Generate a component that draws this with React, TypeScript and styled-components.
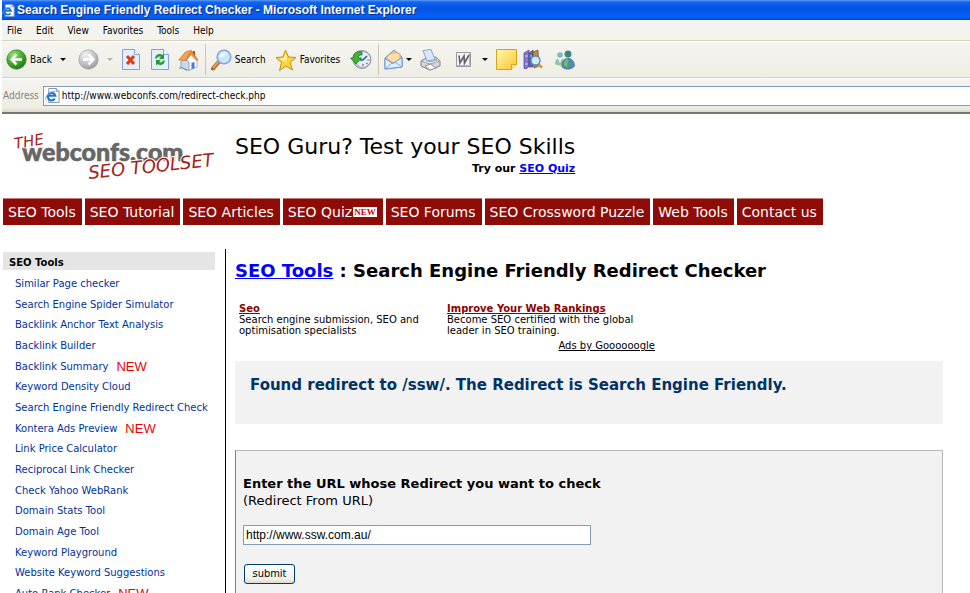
import React from "react";
import styled, { createGlobalStyle } from "styled-components";

const ui = `"DejaVu Sans Condensed", "DejaVu Sans", sans-serif`;
const page = `"DejaVu Sans", Verdana, sans-serif`;

const GlobalStyle = createGlobalStyle`
  * { box-sizing: border-box; }
  html, body, #root { height: 100%; }
  body { margin: 0; background: #fff; color: #000; font-family: ${page}; overflow: hidden; }
  h1, h2, p, ul { margin: 0; padding: 0; }
  ul { list-style: none; }
  svg { display: block; flex: none; }
`;

const Window = styled.div`
  height: 100%;
  display: flex;
  flex-direction: column;
  padding-left: 2px;
  overflow: hidden;
`;

const TitleBar = styled.header`
  flex: none;
  height: 20px;
  display: flex;
  align-items: center;
  gap: 2px;
  background: linear-gradient(#5c9cf0 0, #1465f0 2px, #0353e4 8px, #0560f8 17px, #0347cc 20px);
  color: #fff;
  font: bold 12px/18px "Liberation Sans", sans-serif;
  text-shadow: 1px 1px 0 #0a2a80;
  white-space: nowrap;
`;

const MenuBar = styled.nav`
  flex: none;
  height: 21px;
  display: flex;
  align-items: center;
  gap: 14px;
  padding: 1px 0 0 5px;
  background: #f4f3ee;
  border-bottom: 1px solid #d6d2bd;
`;

const MenuItem = styled.button`
  border: 0;
  padding: 0;
  background: none;
  color: #000;
  font: 10px/16px ${ui};
`;

const ToolBar = styled.div`
  flex: none;
  height: 37px;
  display: flex;
  align-items: center;
  padding-left: 4px;
  background: linear-gradient(#f5f4ef, #eeede5);
  border-top: 1px solid #fff;
  border-bottom: 1px solid #d6d2bd;
`;

const ToolButton = styled.button<{ $gap?: number }>`
  border: 0;
  padding: 0;
  margin: 0 ${(p) => p.$gap ?? 6}px 0 0;
  display: flex;
  align-items: center;
  gap: 3px;
  background: none;
  color: #000;
  font: 10px/16px ${ui};
`;

const Arrow = styled.span<{ $dim?: boolean; $left?: number }>`
  margin-left: ${(p) => p.$left ?? 5}px;
  border: 3px solid transparent;
  border-top-color: ${(p) => (p.$dim ? "#b8b6ac" : "#000")};
  border-bottom: 0;
`;

const Rule = styled.span`
  width: 1px;
  height: 31px;
  margin-right: 5px;
  background: #cbc7b0;
`;

const AddressBar = styled.div`
  flex: none;
  height: 36px;
  display: flex;
  align-items: center;
  gap: 4px;
  padding-left: 1px;
  background: linear-gradient(#f5f4ef, #eeede3 29px, #d8d5c6 34px);
  border-top: 1px solid #fff;
  border-bottom: 2px solid #77766a;
`;

const AddressLabel = styled.label`
  color: #85847b;
  font: 10px/18px ${ui};
`;

const AddressField = styled.div`
  flex: 1;
  height: 20px;
  display: flex;
  align-items: center;
  padding-left: 1px;
  gap: 2px;
  background: #fff;
  border: 1px solid #7f9db9;
  border-right: 0;
`;

const AddressInput = styled.input`
  flex: 1;
  min-width: 0;
  border: 0;
  padding: 0;
  outline: 0;
  background: none;
  color: #000;
  font: 10px/16px ${ui};
`;

const Banner = styled.header`
  flex: none;
  display: flex;
  align-items: flex-start;
  height: 84px;
  padding: 16px 0 0 9px;
`;

const Promo = styled.div`
  margin-left: 14px;
  padding-top: 3px;
  text-align: right;
`;

const PromoTitle = styled.p`
  font-size: 22px;
  line-height: 28px;
`;

const PromoText = styled.p`
  font-size: 11px;
  line-height: 16px;
  font-weight: bold;
`;

const BlueLink = styled.a`
  color: #00f;
  text-decoration: underline;
`;

const NavBar = styled.nav`
  flex: none;
  display: flex;
  gap: 3px;
  padding-left: 1px;
`;

const NavLink = styled.a`
  height: 27px;
  display: flex;
  align-items: center;
  gap: 1px;
  padding: 0 6px 0 5px;
  background: #8f0b07;
  border-top: 1px solid #c07a78;
  color: #fff;
  font-size: 14px;
  line-height: 18px;
  text-decoration: none;
  white-space: nowrap;
`;

const NavBadge = styled.span`
  padding: 0 1px;
  background: #fff;
  color: #e00000;
  font: bold 9px/10px "Liberation Serif", serif;
`;

const Body = styled.div`
  flex: 1;
  min-height: 0;
  display: flex;
  padding: 24px 27px 0 1px;
`;

const SideBar = styled.aside`
  flex: none;
  width: 223px;
  padding: 3px 10px 0 0;
  border-right: 1px solid #000;
`;

const SideTitle = styled.h2`
  height: 18px;
  padding: 2px 0 0 6px;
  background: #e5e5e5;
  font-size: 10px;
  line-height: 18px;
`;

const SideList = styled.ul`
  height: 334px;
  padding: 4px 0 0 12px;
  display: flex;
  flex-direction: column;
  justify-content: space-between;
`;

const SideItem = styled.li`
  display: flex;
  align-items: center;
  gap: 8px;
  height: 20px;
  white-space: nowrap;
`;

const SideLink = styled.a`
  color: #003399;
  font-size: 10px;
  line-height: 20px;
  text-decoration: none;
`;

const NewTag = styled.span`
  color: #f00000;
  font: 13px/18px "Liberation Sans", sans-serif;
`;

const Main = styled.main`
  flex: 1;
  min-width: 0;
  padding: 11px 0 0 9px;
`;

const Heading = styled.h1`
  font-size: 18px;
  line-height: 22px;
  white-space: nowrap;
`;

const Ads = styled.section`
  display: grid;
  grid-template-columns: 208px 208px;
  padding: 21px 0 0 4px;
  font-size: 10px;
  line-height: 11px;
`;

const AdLink = styled.a`
  display: block;
  color: #900000;
  line-height: 11px;
  font-weight: bold;
  white-space: nowrap;
`;

const AdText = styled.p`
  max-width: 190px;
`;

const AdCredit = styled.a`
  grid-column: 1 / -1;
  justify-self: end;
  margin-top: 4px;
  color: #000;
  line-height: 12px;
`;

const Result = styled.section`
  margin-top: 9px;
  padding: 13px 15px 28px;
  background: #f2f2f2;
  color: #003366;
  font-size: 15px;
  line-height: 22px;
  font-weight: bold;
`;

const CheckForm = styled.form`
  height: 200px;
  margin-top: 26px;
  padding: 24px 7px;
  background: #f2f2f2;
  border: 1px solid #b8b8b8;
  border-left-color: #808080;
`;

const FormLabel = styled.label`
  display: block;
  font-size: 13px;
  line-height: 17px;
`;

const UrlInput = styled.input`
  display: block;
  width: 348px;
  height: 20px;
  margin-top: 16px;
  padding: 0 2px;
  border: 1px solid #7f9db9;
  background: #fff;
  color: #000;
  font: 12px/16px "Liberation Sans", sans-serif;
`;

const Submit = styled.button`
  display: block;
  width: 51px;
  height: 20px;
  margin: 19px 0 0 1px;
  padding: 0;
  border: 1px solid #003c74;
  border-radius: 3px;
  background: linear-gradient(#fff, #f1f0ea 80%, #dcd8cc);
  color: #000;
  font: 11px/16px ${ui};
`;

const PageIcon = ({ size = 15 }: { size?: number }) => (
  <svg width={size} height={size} viewBox="0 0 16 16" aria-hidden="true">
    <path d="M4 .5h8l3 3v12H4z" fill="#fff" stroke="#7d8fb3" />
    <path d="M12 .5v3h3" fill="#dfe7f6" stroke="#7d8fb3" />
    <path d="M10.5 11.3A4 4 0 1 1 11 8.300H4" fill="none" stroke="#2374d6" strokeWidth="2.200" />
    <path d="M1 13C-.5 9 6 2.500 11 4" fill="none" stroke="#5ba5ec" />
  </svg>
);

const RoundArrow = ({ forward }: { forward?: boolean }) => (
  <svg width="21" height="21" viewBox="0 0 21 21" aria-hidden="true">
    <defs>
      <radialGradient id={forward ? "fwd" : "bck"} cx=".35" cy=".25" r=".8">
        <stop offset="0" stopColor={forward ? "#f2f2f2" : "#9add75"} />
        <stop offset=".6" stopColor={forward ? "#c0c0c0" : "#41a62c"} />
        <stop offset="1" stopColor={forward ? "#989898" : "#1d7217"} />
      </radialGradient>
    </defs>
    <circle cx="10.500" cy="10.500" r="9.700" fill={`url(#${forward ? "fwd" : "bck"})`} stroke={forward ? "#a0a0a0" : "#318025"} strokeWidth=".7" />
    <path
      d={forward ? "M5 10.500h10M10.500 5.500l5 5-5 5" : "M16 10.500H6M10.500 5.500l-5 5 5 5"}
      fill="none"
      stroke="#fff"
      strokeWidth="2.500"
    />
  </svg>
);

const Sheet = ({ children }: { children: React.ReactNode }) => (
  <svg width="18" height="21" viewBox="0 0 18 21" aria-hidden="true">
    <path d="M.5.500h12l5 5v15H.5z" fill="#e5effc" stroke="#7fa4d8" />
    <path d="M12.500.500v5h5" fill="#fff" stroke="#7fa4d8" />
    {children}
  </svg>
);

const HomeIcon = () => (
  <svg width="21" height="22" viewBox="0 0 21 22" aria-hidden="true">
    <path d="M14.500 2h2.500v6h-2.500z" fill="#c64420" />
    <path d="M8 11l5.500-6 5.500 6v7l-8 3.500z" fill="#fbfcff" stroke="#8fa9d8" strokeWidth=".8" />
    <path d="M3 12l5-1 3 2v8.500l-8-3z" fill="#c8d9f6" stroke="#7895ce" strokeWidth=".8" />
    <path d="M.8 11L7.500 3l6-1.500L7.500 11.500z" fill="#f5a548" stroke="#c97a2c" strokeWidth=".8" />
    <path d="M13 2l7 8.500-1.500 1L13 5.500l-5 6z" fill="#f0913a" stroke="#d0702a" strokeWidth=".6" />
    <path d="M13.500 14l3-1v6l-3 1.200z" fill="#4e79c4" />
    <path d="M1 19.500c3-2 4 0 8 2" stroke="#54a437" fill="none" />
  </svg>
);

const SearchIcon = () => (
  <svg width="21" height="22" viewBox="0 0 21 22" aria-hidden="true">
    <path d="M8 12.500L2 19.500" stroke="#a75d2d" strokeWidth="4" strokeLinecap="round" />
    <path d="M8 12L2.500 18.500" stroke="#ed9c5a" strokeWidth="2" strokeLinecap="round" />
    <circle cx="13" cy="8" r="6.800" fill="#c9e7fc" stroke="#83a7df" strokeWidth="1.600" />
    <path d="M8.500 8a5 5 0 0 1 7-4c-1 3-3 4-7 4z" fill="#fff" />
  </svg>
);

const StarIcon = () => (
  <svg width="22" height="22" viewBox="0 0 22 22" aria-hidden="true">
    <path d="M10.500 1l3 7 7.500.500-6 5 2.500 7.500-6.500-4-6.500 4.500 2-8-5.500-5 7-.500z" fill="#fbd53e" stroke="#c58d16" strokeLinejoin="round" />
    <path d="M10.500 3.500l1.500 6-1.500 3-6-3 4.500-.5z" fill="#fff6a9" />
  </svg>
);

const HistoryIcon = () => (
  <svg width="22" height="21" viewBox="0 0 22 21" aria-hidden="true">
    <circle cx="12" cy="10.500" r="9" fill="#b9c3cc" stroke="#8b949e" />
    <circle cx="13" cy="10.500" r="6.500" fill="#dcf0fc" stroke="#fff" />
    <path d="M13 11l4-4M13 11h-3" stroke="#28558c" strokeWidth="1.500" />
    <path d="M13 15v2M17.500 11h2M16.500 14l1 1" stroke="#d33" strokeWidth="1.200" />
    <path d="M12 3C7 1.500 3 4.500 3 9H.5l5.500 6 5.500-6H8.500c0-2 1-3.500 3.500-3z" fill="#48ae35" stroke="#257623" strokeWidth=".8" />
  </svg>
);

const MailIcon = () => (
  <svg width="19" height="21" viewBox="0 0 19 21" aria-hidden="true">
    <path d="M1 9l9-8 8 7v10L1 20z" fill="#b7d7fa" stroke="#768fcf" />
    <path d="M3 8c4-5 9-5 13-3v6l-7 3-6-4z" fill="#ffe0a0" stroke="#e7a74e" />
    <path d="M1 9.500l8 5 9-6V18L1 20z" fill="#dff1ff" stroke="#768fcf" />
    <path d="M1 20l7-6M18 18l-7-5" stroke="#7daced" />
  </svg>
);

const PrintIcon = () => (
  <svg width="21" height="22" viewBox="0 0 21 22" aria-hidden="true">
    <path d="M1 12l5-3 10-1 4 4v5l-10 4-9-4z" fill="#d6d6d9" stroke="#85858c" />
    <path d="M1 12l9 3 10-3M6 11l8-2 3 2-7 2z" fill="#f8f8f8" stroke="#9e9ea3" />
    <path d="M3 1.500l8-1 4 10-8 1.500z" fill="#d8e9ff" stroke="#83a3e2" />
    <path d="M5 17l6-2 5 4-6 2z" fill="#fff" stroke="#919198" />
  </svg>
);

const WordIcon = () => (
  <svg width="15" height="15" viewBox="0 0 15 15" aria-hidden="true">
    <path d="M.5.500h14v14H.5z" fill="#f4f4f4" stroke="#999" />
    <path d="M1 13.500h12.500V1" fill="none" stroke="#bbb" />
    <path d="M3 3.500l1 7.500 4-7 .5 7 4.500-8" fill="none" stroke="#666" strokeWidth="1.700" />
  </svg>
);

const NoteIcon = () => (
  <svg width="21" height="21" viewBox="0 0 21 21" aria-hidden="true">
    <defs>
      <linearGradient id="note" x2="1" y2="1">
        <stop stopColor="#fff9b0" />
        <stop offset="1" stopColor="#fcc52b" />
      </linearGradient>
    </defs>
    <path d="M.5.500h20v15l-5 5H.5z" fill="url(#note)" stroke="#d6a31f" />
    <path d="M20.500 15.500h-5v5" fill="#fff1a0" stroke="#d6a31f" />
  </svg>
);

const ResearchIcon = () => (
  <svg width="21" height="21" viewBox="0 0 21 21" aria-hidden="true">
    <path d="M1 4l5-3v16l-2 2.500H1z" fill="#8379ca" stroke="#4a438d" strokeWidth=".7" />
    <path d="M6 4l4-3v17H6z" fill="#5a68b5" stroke="#4a438d" strokeWidth=".7" />
    <path d="M10 3l5-2 1 16-5 2z" fill="#ba8944" stroke="#715120" strokeWidth=".7" />
    <path d="M2 7h3M7 7h2M2 15h3" stroke="#d1d1f5" />
    <path d="M15 15l4 3.500" stroke="#d39a2d" strokeWidth="2.500" />
    <circle cx="12.500" cy="11.500" r="4.500" fill="#c8efff" stroke="#6386b7" strokeWidth="1.400" />
  </svg>
);

const PeopleIcon = () => (
  <svg width="21" height="20" viewBox="0 0 21 20" aria-hidden="true">
    <circle cx="6" cy="5" r="2.800" fill="#7cbac3" />
    <path d="M1 14c0-8 10-8 10 0-2 2-7 2-10 0z" fill="#8dc7a3" />
    <path d="M4 8l2 5 2-5z" fill="#fff" />
    <circle cx="14" cy="4" r="3.500" fill="#39877c" />
    <path d="M8 17c-1-11 12-12 12.500-1-3 4-9 4-12.500 1z" fill="#4f8faa" stroke="#386f88" strokeWidth=".7" />
    <path d="M10 15c0-4 2-6 4-6l-1 8z" fill="#83bb64" />
  </svg>
);

const Logo = () => (
  <svg width="210" height="54" viewBox="0 0 210 54" role="img" aria-label="The webconfs.com SEO Toolset">
    <text x="11" y="31" fill="#666" stroke="#666" strokeWidth=".6" fontFamily="Lato, sans-serif" fontWeight="900" fontSize="25">webconfs.com</text>
    <g fill="#a82018" fontFamily="'DejaVu Sans', sans-serif" fontStyle="italic" stroke="#fff" strokeWidth="2" paintOrder="stroke">
      <text transform="translate(4 19) rotate(-10)" fontSize="15">THE</text>
      <text transform="translate(78 49) rotate(-6)" fontSize="18">SEO TOOLSET</text>
    </g>
  </svg>
);

const menus = ["File", "Edit", "View", "Favorites", "Tools", "Help"];

const sections: [string, boolean?][] = [
  ["SEO Tools"],
  ["SEO Tutorial"],
  ["SEO Articles"],
  ["SEO Quiz", true],
  ["SEO Forums"],
  ["SEO Crossword Puzzle"],
  ["Web Tools"],
  ["Contact us"],
];

const tools: [string, boolean?][] = [
  ["Similar Page checker"],
  ["Search Engine Spider Simulator"],
  ["Backlink Anchor Text Analysis"],
  ["Backlink Builder"],
  ["Backlink Summary", true],
  ["Keyword Density Cloud"],
  ["Search Engine Friendly Redirect Check"],
  ["Kontera Ads Preview", true],
  ["Link Price Calculator"],
  ["Reciprocal Link Checker"],
  ["Check Yahoo WebRank"],
  ["Domain Stats Tool"],
  ["Domain Age Tool"],
  ["Keyword Playground"],
  ["Website Keyword Suggestions"],
  ["Auto Rank Checker", true],
];

export default function App() {
  return (
    <Window>
      <GlobalStyle />
      <TitleBar>
        <PageIcon size={13} />
        Search Engine Friendly Redirect Checker - Microsoft Internet Explorer
      </TitleBar>
      <MenuBar>
        {menus.map((m) => (
          <MenuItem key={m}>{m}</MenuItem>
        ))}
      </MenuBar>
      <ToolBar>
        <ToolButton $gap={12}>
          <RoundArrow />
          Back
          <Arrow />
        </ToolButton>
        <ToolButton $gap={9} aria-label="Forward">
          <RoundArrow forward />
          <Arrow $dim />
        </ToolButton>
        <ToolButton $gap={11} aria-label="Stop">
          <Sheet>
            <path d="M5 7l7 8M12 7l-7 8" stroke="#e03a12" strokeWidth="3" />
          </Sheet>
        </ToolButton>
        <ToolButton $gap={9} aria-label="Refresh">
          <Sheet>
            <path d="M4 9.500C4.500 5 9 4 11.500 6L13 4.500V10H8l1.800-2C8 7 6.500 8 6 9.500zM14 11.500c-.5 4.500-5 5.500-7.500 3.500L5 16.500V11h5l-1.800 2c1.800 1 3.300 0 3.800-1.500z" fill="#259a32" />
          </Sheet>
        </ToolButton>
        <ToolButton aria-label="Home">
          <HomeIcon />
        </ToolButton>
        <Rule />
        <ToolButton $gap={9}>
          <SearchIcon />
          Search
        </ToolButton>
        <ToolButton $gap={10}>
          <StarIcon />
          Favorites
        </ToolButton>
        <ToolButton $gap={6} aria-label="History">
          <HistoryIcon />
        </ToolButton>
        <Rule />
        <ToolButton $gap={8} aria-label="Mail">
          <MailIcon />
          <Arrow $left={0} />
        </ToolButton>
        <ToolButton $gap={15} aria-label="Print">
          <PrintIcon />
        </ToolButton>
        <ToolButton $gap={8} aria-label="Edit with Word">
          <WordIcon />
          <Arrow $left={8} />
        </ToolButton>
        <ToolButton aria-label="Note">
          <NoteIcon />
        </ToolButton>
        <ToolButton $gap={10} aria-label="Research">
          <ResearchIcon />
        </ToolButton>
        <ToolButton aria-label="Messenger">
          <PeopleIcon />
        </ToolButton>
      </ToolBar>
      <AddressBar>
        <AddressLabel htmlFor="address">Address</AddressLabel>
        <AddressField>
          <PageIcon />
          <AddressInput id="address" defaultValue="http://www.webconfs.com/redirect-check.php" />
        </AddressField>
      </AddressBar>
      <Banner>
        <Logo />
        <Promo>
          <PromoTitle>SEO Guru? Test your SEO Skills</PromoTitle>
          <PromoText>
            Try our <BlueLink href="#quiz">SEO Quiz</BlueLink>
          </PromoText>
        </Promo>
      </Banner>
      <NavBar>
        {sections.map(([name, fresh]) => (
          <NavLink key={name} href="#section">
            {name}
            {fresh && <NavBadge>NEW</NavBadge>}
          </NavLink>
        ))}
      </NavBar>
      <Body>
        <SideBar>
          <SideTitle>SEO Tools</SideTitle>
          <SideList>
            {tools.map(([name, fresh]) => (
              <SideItem key={name}>
                <SideLink href="#tool">{name}</SideLink>
                {fresh && <NewTag>NEW</NewTag>}
              </SideItem>
            ))}
          </SideList>
        </SideBar>
        <Main>
          <Heading>
            <BlueLink href="#tools">SEO Tools</BlueLink> : Search Engine Friendly Redirect Checker
          </Heading>
          <Ads>
            <div>
              <AdLink href="#seo">Seo</AdLink>
              <AdText>Search engine submission, SEO and optimisation specialists</AdText>
            </div>
            <div>
              <AdLink href="#rankings">Improve Your Web Rankings</AdLink>
              <AdText>Become SEO certified with the global leader in SEO training.</AdText>
            </div>
            <AdCredit href="#ads">Ads by Goooooogle</AdCredit>
          </Ads>
          <Result>Found redirect to /ssw/. The Redirect is Search Engine Friendly.</Result>
          <CheckForm onSubmit={(e) => e.preventDefault()}>
            <FormLabel htmlFor="url">
              <b>Enter the URL whose Redirect you want to check</b>
              <br />
              (Redirect From URL)
            </FormLabel>
            <UrlInput id="url" defaultValue="http://www.ssw.com.au/" />
            <Submit type="submit">submit</Submit>
          </CheckForm>
        </Main>
      </Body>
    </Window>
  );
}
